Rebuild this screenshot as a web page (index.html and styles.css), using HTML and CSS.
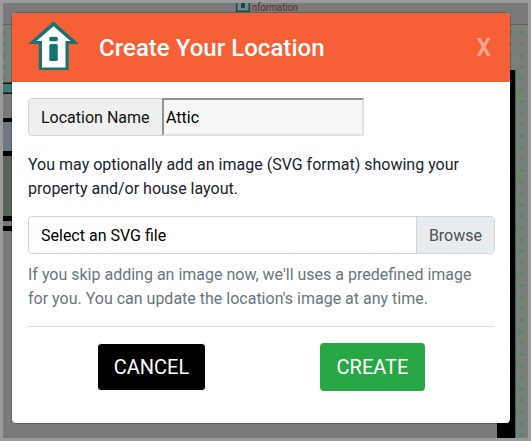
FILE: index.html
```
<!DOCTYPE html>
<html lang="en">
<head>
<meta charset="utf-8">
<title>Create Your Location</title>
<link rel="stylesheet" href="styles.css">
</head>
<body>
<svg class="floorplan" width="531" height="441" viewBox="0 0 531 441" aria-hidden="true">
  <defs>
    <pattern id="dots" x="515.75" y="26.75" width="11.5" height="11.5" patternUnits="userSpaceOnUse">
      <circle cx="5.75" cy="5.75" r="2.1" fill="#5c8260"/>
    </pattern>
  </defs>
  <rect width="531" height="441" fill="#9b9b9b"/>
  <rect x="3" y="3" width="525" height="435" fill="#7a7a7a"/>
  <rect x="3" y="24" width="525" height="1" fill="#606060"/>
  <rect x="3" y="25" width="9" height="57" fill="#798079"/>
  <rect x="3" y="25" width="3" height="57" fill="url(#dots)"/>
  <rect x="3" y="82.500" width="9" height="11.500" fill="#111"/>
  <rect x="3" y="84" width="9" height="8.500" fill="#407a78"/>
  <rect x="3" y="118" width="9" height="113" fill="#000"/>
  <rect x="3" y="122" width="9" height="29" fill="#70777e"/>
  <rect x="3" y="156" width="9" height="60" fill="#596159"/>
  <rect x="3" y="221" width="9" height="5" fill="#70777e"/>
  <rect x="510" y="25" width="18" height="413" fill="#798079"/>
  <rect x="510" y="25" width="18" height="413" fill="url(#dots)"/>
  <rect x="497" y="70" width="18" height="368" fill="#000"/>
  <rect x="515" y="70" width="1" height="368" fill="#555a55"/>
  <path d="M236.700 3V11.300H249.300V3" fill="#7d8585" stroke="#0c5050" stroke-width="1.500"/>
  <rect x="241" y="3" width="4" height="5" fill="#0c4b4b"/>
  <text x="252" y="11" textLength="46" lengthAdjust="spacingAndGlyphs" class="plan-label">nformation</text>
</svg>
<main class="modal">
  <header class="modal-header">
    <svg class="logo" width="52" height="51" viewBox="0 0 52 51" aria-hidden="true">
      <path d="M25.500 .5L51 23H40.700V49H10.800V23H0Z" fill="#187373"/>
      <path d="M25.500 5.200L42.500 20H37.500V46.500H14V20H8.500Z" fill="#fff"/>
      <rect x="21.300" y="15.700" width="8.500" height="4.500" rx="1.500" fill="#187373"/>
      <rect x="21.300" y="23" width="8.500" height="17" rx="1.500" fill="#187373"/>
    </svg>
    <h1 class="title">Create Your Location</h1>
    <button class="close" type="button" aria-label="Close">X</button>
  </header>
  <form class="modal-body">
    <div class="name-group">
      <label class="name-label" for="name">Location Name</label>
      <input class="name-input" id="name" value="Attic">
    </div>
    <p class="intro">You may optionally add an image (SVG format) showing your<br>property and/or house layout.</p>
    <div class="file-picker">
      <span class="file-name">Select an SVG file</span>
      <span class="browse">Browse</span>
    </div>
    <p class="hint">If you skip adding an image now, we'll uses a predefined image<br>for you. You can update the location's image at any time.</p>
    <div class="actions">
      <button class="btn cancel" type="button">CANCEL</button>
      <button class="btn create" type="button">CREATE</button>
    </div>
  </form>
</main>
</body>
</html>
```
FILE: styles.css
```
* { box-sizing: border-box; }

body {
  margin: 0;
  width: 531px;
  height: 441px;
  overflow: hidden;
  padding: 13px 21px 18px 12px;
  font: 16px/24px Roboto, sans-serif;
  color: #212130;
}

.floorplan {
  position: absolute;
  top: 0;
  left: 0;
}

.plan-label {
  font: 10.5px Roboto, sans-serif;
  fill: #622e24;
}

.modal {
  position: relative;
  height: 410px;
  background: #fff;
  border-radius: 4px;
  box-shadow: 0 0 0 1px rgba(0, 0, 0, .2);
  overflow: hidden;
}

.modal-header {
  display: flex;
  align-items: center;
  height: 69px;
  padding: 0 19px 0 16px;
  background: #f56036;
}

.logo { flex: none; margin-bottom: 2px; }

.title {
  flex: 1;
  margin: 0 0 0 19px;
  font-size: 24px;
  font-weight: 500;
  line-height: 36px;
  letter-spacing: .03px;
  color: #fff;
}

.close {
  padding: 0;
  border: 0;
  background: none;
  color: #fba68e;
  font: 700 24px/36px "DejaVu Sans Mono", monospace;
}

.modal-body { padding: 16px 15px 0 16px; }

.name-group {
  display: flex;
  width: 336px;
  height: 38px;
}

.name-label {
  width: 135px;
  padding: 7px 12px 5px;
  border: 1px solid #ced4da;
  border-radius: 4px 0 0 4px;
  background: #efefef;
  color: #111;
  white-space: nowrap;
}

.name-input {
  width: 202px;
  margin-left: -1px;
  padding: 1px 2px;
  border: 2px solid;
  border-color: #949494 #e1e1e1 #e1e1e1 #949494;
  border-radius: 0;
  background: #f7f7f7;
  color: #000;
  font: 16px Roboto, sans-serif;
}

.intro { margin: 17px 0 15px; }

.file-picker {
  display: flex;
  height: 38px;
  border: 1px solid #ced4da;
  border-radius: 4px;
  overflow: hidden;
}

.file-name {
  flex: 1;
  padding: 7px 12px 5px;
  color: #000;
}

.browse {
  padding: 7px 12px 5px;
  border-left: 1px solid #ced4da;
  background: #e9ecef;
  color: #495057;
}

.hint {
  margin: 9px 0 15px;
  color: #6c757d;
}

.actions {
  display: flex;
  justify-content: space-between;
  align-items: center;
  margin-right: 1px;
  padding: 16px 69px 0;
  border-top: 1px solid #dee2e6;
}

.btn {
  padding: 0;
  border: 0;
  border-radius: 4px;
  color: #fff;
  font: 20px/30px Roboto, sans-serif;
}

.cancel {
  width: 109px;
  height: 48px;
  border: 1px solid #fff;
  background: #000;
}

.create {
  width: 105px;
  height: 48px;
  background: #28a745;
}
```
